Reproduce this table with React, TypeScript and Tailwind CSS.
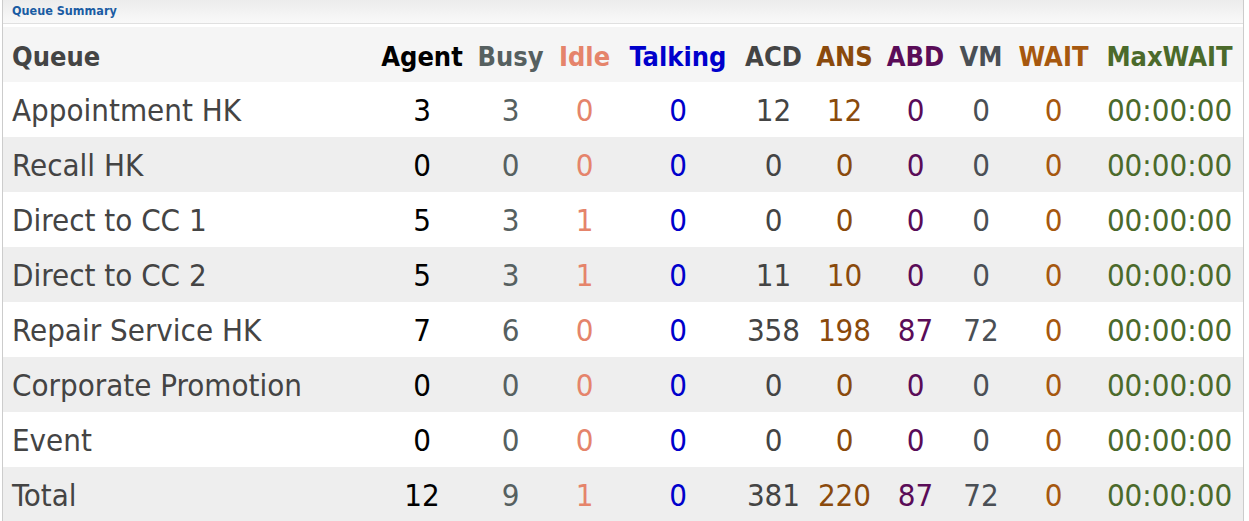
import React from "react";

const cols = "grid grid-cols-[370px_98px_79px_69px_118px_73px_69px_73px_58px_87px_145px]";

const colColors = [
  "text-[#444444]",
  "text-black",
  "text-[#566060]",
  "text-[#e5846b]",
  "text-[#0000cc]",
  "text-[#444444]",
  "text-[#8a4a0c]",
  "text-[#5a0c58]",
  "text-[#4a4f55]",
  "text-[#a6580f]",
  "text-[#4b6a2b]",
];

const headers = ["Queue", "Agent", "Busy", "Idle", "Talking", "ACD", "ANS", "ABD", "VM", "WAIT", "MaxWAIT"];

const rows: (string | number)[][] = [
  ["Appointment HK", 3, 3, 0, 0, 12, 12, 0, 0, 0, "00:00:00"],
  ["Recall HK", 0, 0, 0, 0, 0, 0, 0, 0, 0, "00:00:00"],
  ["Direct to CC 1", 5, 3, 1, 0, 0, 0, 0, 0, 0, "00:00:00"],
  ["Direct to CC 2", 5, 3, 1, 0, 11, 10, 0, 0, 0, "00:00:00"],
  ["Repair Service HK", 7, 6, 0, 0, 358, 198, 87, 72, 0, "00:00:00"],
  ["Corporate Promotion", 0, 0, 0, 0, 0, 0, 0, 0, 0, "00:00:00"],
  ["Event", 0, 0, 0, 0, 0, 0, 0, 0, 0, "00:00:00"],
  ["Total", 12, 9, 1, 0, 381, 220, 87, 72, 0, "00:00:00"],
];

export default function App() {
  return (
    <div className="w-[1249px] h-[521px] bg-white overflow-hidden">
      <div
        className="ml-[2px] w-[1242px] border-x border-[#cccccc] leading-none"
        style={{ fontFamily: '"DejaVu Sans Condensed", "DejaVu Sans", sans-serif' }}
      >
        <div className="h-[24px] bg-gradient-to-b from-[#ececec] to-[#f9f9f9] border-b border-[#e0e0e0] flex items-center pl-[9px]">
          <span className="text-[12.5px] font-bold text-[#1a5ca3]">Queue Summary</span>
        </div>
        <div className="h-[3px] bg-white" />
        <div className={`${cols} h-[55px] bg-[#f5f5f5] items-center font-bold text-[27px] pt-[3px]`}>
          {headers.map((h, i) => (
            <div key={h} className={`${colColors[i]} ${i === 0 ? "pl-[9px] text-left" : "text-center"}`}>
              {h}
            </div>
          ))}
        </div>
        {rows.map((r, ri) => (
          <div
            key={ri}
            className={`${cols} h-[55px] items-center text-[31px] pt-[2px] ${ri % 2 === 0 ? "bg-white" : "bg-[#eeeeee]"}`}
          >
            {r.map((v, i) => (
              <div key={i} className={`${colColors[i]} ${i === 0 ? "pl-[9px] text-left" : "text-center"}`}>
                {v}
              </div>
            ))}
          </div>
        ))}
      </div>
    </div>
  );
}
